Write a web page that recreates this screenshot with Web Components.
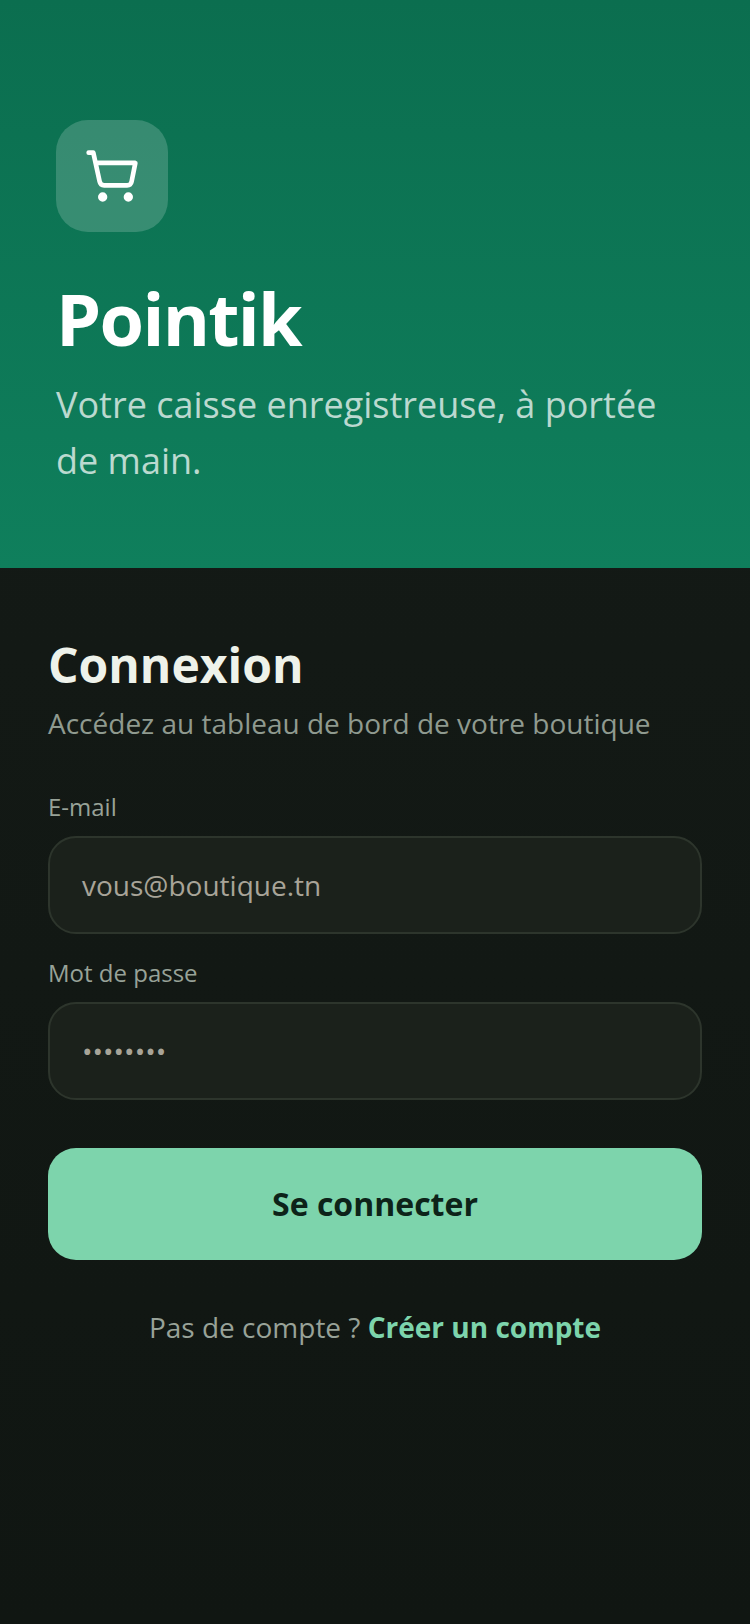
<!DOCTYPE html>
<html lang="fr">
<head>
<meta charset="utf-8">
<title>Pointik</title>
<style>
  html, body { margin: 0; height: 100%; }
  body { font-family: "Open Sans", sans-serif; background: #101612; }
</style>
</head>
<body>
<login-page>
  <brand-hero slot="hero" name="Pointik" tagline="Votre caisse enregistreuse, à portée de main."></brand-hero>
  <login-form slot="form"></login-form>
</login-page>

<script>
class LoginPage extends HTMLElement {
  constructor() {
    super();
    this.attachShadow({ mode: "open" });
    this.shadowRoot.innerHTML = `
      <style>
        :host {
          display: flex;
          flex-direction: column;
          min-height: 1624px;
          background: linear-gradient(180deg, #151b17 0%, #101612 100%);
        }
      </style>
      <slot name="hero"></slot>
      <slot name="form"></slot>`;
  }
}

class BrandHero extends HTMLElement {
  constructor() {
    super();
    this.attachShadow({ mode: "open" });
  }

  connectedCallback() {
    this.shadowRoot.innerHTML = `
      <style>
        :host {
          display: block;
          box-sizing: border-box;
          height: 568px;
          padding: 120px 56px 0;
          background: linear-gradient(180deg, #0b6e4f 0%, #0f7f5c 100%);
          color: #fff;
        }
        .logo {
          width: 112px;
          height: 112px;
          border-radius: 32px;
          background: rgba(255, 255, 255, 0.18);
          display: flex;
          align-items: center;
          justify-content: center;
        }
        h1 {
          margin: 42px 0 0;
          font-size: 72px;
          line-height: 88px;
          font-weight: 700;
          letter-spacing: -1.7px;
        }
        p {
          margin: 15px 0 0;
          font-size: 36px;
          line-height: 56px;
          color: rgba(255, 255, 255, 0.72);
        }
      </style>
      <div class="logo">
        <svg width="56" height="56" viewBox="0 0 24 24" fill="none" stroke="#fff" stroke-width="2" stroke-linecap="round" stroke-linejoin="round">
          <circle cx="8" cy="21" r="1"></circle>
          <circle cx="19" cy="21" r="1"></circle>
          <path d="M2 2h2l2.7 12.4a2 2 0 0 0 2 1.6h9.7a2 2 0 0 0 2-1.6L22 6.4H5"></path>
        </svg>
      </div>
      <h1>${this.getAttribute("name")}</h1>
      <p>${this.getAttribute("tagline")}</p>`;
  }
}

class TextField extends HTMLElement {
  constructor() {
    super();
    this.attachShadow({ mode: "open" });
  }

  connectedCallback() {
    const secret = this.hasAttribute("secret");
    this.shadowRoot.innerHTML = `
      <style>
        :host { display: block; }
        label {
          display: block;
          font-size: 24px;
          line-height: 32px;
          color: #98a298;
          margin-bottom: 13px;
        }
        .box {
          box-sizing: border-box;
          height: 98px;
          display: flex;
          align-items: center;
          padding: 0 32px;
          background: #1b211b;
          border: 2px solid #2d352c;
          border-radius: 28px;
          font-size: 28px;
          color: #a8a498;
        }
      </style>
      <label>${this.getAttribute("label")}</label>
      <div class="box">${secret ? "••••••••" : this.getAttribute("placeholder")}</div>`;
  }
}

class LoginForm extends HTMLElement {
  constructor() {
    super();
    this.attachShadow({ mode: "open" });
    this.shadowRoot.innerHTML = `
      <style>
        :host {
          display: block;
          padding: 64px 48px 0;
        }
        h2 {
          margin: 0;
          font-size: 48px;
          line-height: 66px;
          font-weight: 700;
          color: #eef2ea;
        }
        .sub {
          margin: 6px 0 0;
          font-size: 28px;
          line-height: 39px;
          color: #8f9a8f;
        }
        .fields {
          display: flex;
          flex-direction: column;
          gap: 23px;
          margin-top: 48px;
        }
        button {
          display: block;
          width: 100%;
          height: 112px;
          margin-top: 48px;
          padding: 0 0 2px;
          border: 0;
          border-radius: 28px;
          background: #7dd4ac;
          color: #0d2319;
          font: 700 32px "Open Sans", sans-serif;
        }
        .foot {
          margin: 47px 0 0;
          text-align: center;
          font-size: 28px;
          line-height: 40px;
          color: #98a298;
        }
        .foot a { color: #7dd4ac; font-weight: 700; text-decoration: none; }
      </style>
      <h2>Connexion</h2>
      <p class="sub">Accédez au tableau de bord de votre boutique</p>
      <div class="fields">
        <text-field label="E-mail" placeholder="vous@boutique.tn"></text-field>
        <text-field label="Mot de passe" secret></text-field>
      </div>
      <button type="button">Se connecter</button>
      <p class="foot">Pas de compte ? <a href="#">Créer un compte</a></p>`;
  }
}

customElements.define("login-page", LoginPage);
customElements.define("brand-hero", BrandHero);
customElements.define("text-field", TextField);
customElements.define("login-form", LoginForm);
</script>
</body>
</html>
